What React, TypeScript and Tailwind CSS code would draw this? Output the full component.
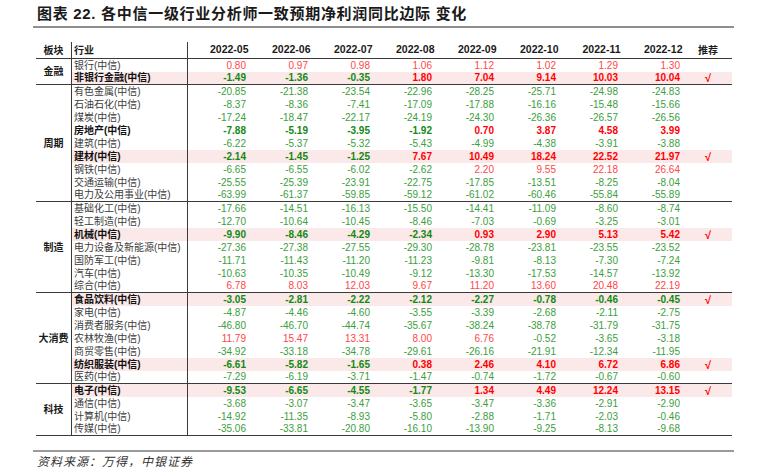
type Row = { name: string; vals: string[]; bold?: boolean; hl?: boolean };
type Section = { name: string; rows: Row[] };

const months = ['2022-05', '2022-06', '2022-07', '2022-08', '2022-09', '2022-10', '2022-11', '2022-12'];

const sections: Section[] = [
  {
    name: '金融',
    rows: [
      { name: '银行(中信)', vals: ['0.80', '0.97', '0.98', '1.06', '1.12', '1.02', '1.29', '1.30'] },
      { name: '非银行金融(中信)', vals: ['-1.49', '-1.36', '-0.35', '1.80', '7.04', '9.14', '10.03', '10.04'], bold: true, hl: true },
    ],
  },
  {
    name: '周期',
    rows: [
      { name: '有色金属(中信)', vals: ['-20.85', '-21.38', '-23.54', '-22.96', '-28.25', '-25.71', '-24.98', '-24.83'] },
      { name: '石油石化(中信)', vals: ['-8.37', '-8.36', '-7.41', '-17.09', '-17.88', '-16.16', '-15.48', '-15.66'] },
      { name: '煤炭(中信)', vals: ['-17.24', '-18.47', '-22.17', '-24.19', '-24.30', '-26.36', '-26.57', '-26.56'] },
      { name: '房地产(中信)', vals: ['-7.88', '-5.19', '-3.95', '-1.92', '0.70', '3.87', '4.58', '3.99'], bold: true },
      { name: '建筑(中信)', vals: ['-6.22', '-5.37', '-5.32', '-5.43', '-4.99', '-4.38', '-3.91', '-3.88'] },
      { name: '建材(中信)', vals: ['-2.14', '-1.45', '-1.25', '7.67', '10.49', '18.24', '22.52', '21.97'], bold: true, hl: true },
      { name: '钢铁(中信)', vals: ['-6.65', '-6.55', '-6.02', '-2.62', '2.20', '9.55', '22.18', '26.64'] },
      { name: '交通运输(中信)', vals: ['-25.55', '-25.39', '-23.91', '-22.75', '-17.85', '-13.51', '-8.25', '-8.04'] },
      { name: '电力及公用事业(中信)', vals: ['-63.99', '-61.37', '-59.85', '-59.12', '-61.02', '-60.46', '-55.84', '-55.89'] },
    ],
  },
  {
    name: '制造',
    rows: [
      { name: '基础化工(中信)', vals: ['-17.66', '-14.51', '-16.13', '-15.50', '-14.41', '-11.09', '-8.60', '-8.74'] },
      { name: '轻工制造(中信)', vals: ['-12.70', '-10.64', '-10.45', '-8.46', '-7.03', '-0.69', '-3.25', '-3.01'] },
      { name: '机械(中信)', vals: ['-9.90', '-8.46', '-4.29', '-2.34', '0.93', '2.90', '5.13', '5.42'], bold: true, hl: true },
      { name: '电力设备及新能源(中信)', vals: ['-27.36', '-27.38', '-27.55', '-29.30', '-28.78', '-23.81', '-23.55', '-23.52'] },
      { name: '国防军工(中信)', vals: ['-11.71', '-11.43', '-11.20', '-11.23', '-9.81', '-8.13', '-7.30', '-7.24'] },
      { name: '汽车(中信)', vals: ['-10.63', '-10.35', '-10.49', '-9.12', '-13.30', '-17.53', '-14.57', '-13.92'] },
      { name: '综合(中信)', vals: ['6.78', '8.03', '12.03', '9.67', '11.20', '13.60', '20.48', '22.19'] },
    ],
  },
  {
    name: '大消费',
    rows: [
      { name: '食品饮料(中信)', vals: ['-3.05', '-2.81', '-2.22', '-2.12', '-2.27', '-0.78', '-0.46', '-0.45'], bold: true, hl: true },
      { name: '家电(中信)', vals: ['-4.87', '-4.46', '-4.60', '-3.55', '-3.39', '-2.68', '-2.11', '-2.75'] },
      { name: '消费者服务(中信)', vals: ['-46.80', '-46.70', '-44.74', '-35.67', '-38.24', '-38.78', '-31.79', '-31.75'] },
      { name: '农林牧渔(中信)', vals: ['11.79', '15.47', '13.31', '8.00', '6.76', '-0.52', '-3.65', '-3.18'] },
      { name: '商贸零售(中信)', vals: ['-34.92', '-33.18', '-34.78', '-29.61', '-26.16', '-21.91', '-12.34', '-11.95'] },
      { name: '纺织服装(中信)', vals: ['-6.61', '-5.82', '-1.65', '0.38', '2.46', '4.10', '6.72', '6.86'], bold: true, hl: true },
      { name: '医药(中信)', vals: ['-7.29', '-6.19', '-3.71', '-1.47', '-0.74', '-1.72', '-0.67', '-0.60'] },
    ],
  },
  {
    name: '科技',
    rows: [
      { name: '电子(中信)', vals: ['-9.53', '-6.65', '-4.55', '-1.77', '1.34', '4.49', '12.24', '13.15'], bold: true, hl: true },
      { name: '通信(中信)', vals: ['-3.68', '-3.07', '-3.47', '-3.65', '-3.47', '-3.36', '-2.91', '-2.90'] },
      { name: '计算机(中信)', vals: ['-14.92', '-11.35', '-8.93', '-5.80', '-2.88', '-1.71', '-2.03', '-0.46'] },
      { name: '传媒(中信)', vals: ['-35.06', '-33.81', '-20.80', '-16.10', '-13.90', '-9.25', '-8.13', '-9.68'] },
    ],
  },
];

const font = "font-['Liberation_Sans','Noto_Sans_CJK_SC',sans-serif]";

function valueClass(v: string, bold?: boolean) {
  const neg = v.startsWith('-');
  if (bold) return neg ? 'text-[#128a12] font-bold' : 'text-[#ff0000] font-bold';
  return neg ? 'text-[#3c9e3c]' : 'text-[#ff4646]';
}

function DataRow({ row, last }: { row: Row; last: boolean }) {
  return (
    <div
      className={`grid grid-cols-[116px_repeat(8,62px)_48px] items-center leading-[12px] ${last ? 'h-[12px]' : 'h-[13px]'} ${row.hl ? 'bg-[#fbe8e8]' : ''}`}
    >
      <div
        className={`h-full flex items-center pl-[2px] border-r border-[#3a3a3a] text-[10px] whitespace-nowrap ${row.bold ? 'font-bold text-[#111]' : 'text-[#3c3c3c]'}`}
      >
        {row.name}
      </div>
      {row.vals.map((v, i) => (
        <div key={i} className={`text-right pr-[4px] text-[10px] ${valueClass(v, row.bold)}`}>
          {v}
        </div>
      ))}
      <div className="text-center text-[11px] font-bold text-[#ff0000]">{row.hl ? '√' : ''}</div>
    </div>
  );
}

export default function App() {
  return (
    <div className={`w-[763px] h-[475px] bg-white pt-[4px] pl-[33px] ${font}`}>
      <div className="pl-[4px] h-[20px] leading-[20px] text-[15px] font-bold tracking-[0.7px] text-[#1a1a1a] whitespace-nowrap">
        图表 22. 各中信一级行业分析师一致预期净利润同比边际 变化
      </div>
      <div className="mt-[2px] w-[701px] h-[2px] bg-[#8f8f8f]"></div>

      <div className="mt-[14px] ml-[3px] w-[696px]">
        <div className="flex h-[17px] border-b border-[#3a3a3a] font-bold text-[#1a1a1a]">
          <div className="w-[36px] border-r border-[#3a3a3a] flex items-center justify-center text-[10px]">板块</div>
          <div className="grid grid-cols-[116px_repeat(8,62px)_48px] items-center">
            <div className="h-full flex items-center pl-[2px] border-r border-[#3a3a3a] text-[10px]">行业</div>
            {months.map((m) => (
              <div key={m} className="text-right pr-[1.5px] text-[10.5px]">
                {m}
              </div>
            ))}
            <div className="text-center text-[10px]">推荐</div>
          </div>
        </div>

        {sections.map((s) => (
          <div key={s.name} className="flex border-b border-[#3a3a3a]">
            <div className="w-[36px] border-r border-[#3a3a3a] flex items-center justify-center text-[10px] font-bold text-[#1a1a1a] whitespace-nowrap">
              {s.name}
            </div>
            <div className="flex flex-col">
              {s.rows.map((r, i) => (
                <DataRow key={r.name} row={r} last={i === s.rows.length - 1} />
              ))}
            </div>
          </div>
        ))}
      </div>

      <div className="mt-[14px] w-[701px] h-[2px] bg-[#9a9a9a]"></div>
      <div className="mt-[2px] pl-[4px] leading-[16px] text-[12px] italic tracking-[1px] text-[#333]">
        资料来源：万得，中银证券
      </div>
    </div>
  );
}
